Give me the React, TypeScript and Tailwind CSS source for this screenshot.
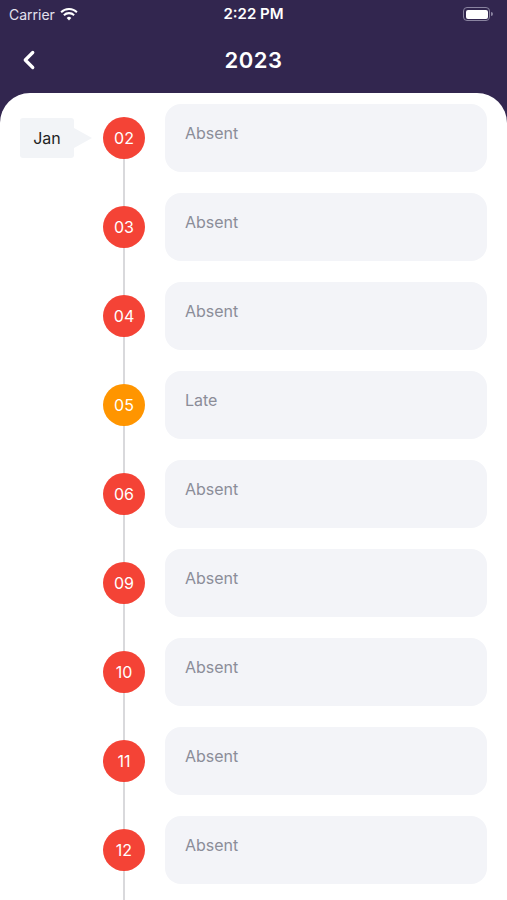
import { ChevronLeft } from 'lucide-react';

type Day = { day: string; status: 'Absent' | 'Late'; month?: string };

const days: Day[] = [
  { day: '02', status: 'Absent', month: 'Jan' },
  { day: '03', status: 'Absent' },
  { day: '04', status: 'Absent' },
  { day: '05', status: 'Late' },
  { day: '06', status: 'Absent' },
  { day: '09', status: 'Absent' },
  { day: '10', status: 'Absent' },
  { day: '11', status: 'Absent' },
  { day: '12', status: 'Absent' },
];

function StatusBar() {
  return (
    <div className="h-[28px] flex items-center justify-between px-[9px] text-white">
      <div className="flex items-center gap-[5px] w-[120px]">
        <span className="text-[14px] text-[#e4e1ee]">Carrier</span>
        <svg width="18" height="13" viewBox="0 0 18 13" fill="#ffffff">
          <path d="M9 12.5 11.3 9.9a3.3 3.3 0 0 0-4.6 0Z" />
          <path d="M9 6.2c1.7 0 3.3.7 4.4 1.8l1.4-1.5A8 8 0 0 0 9 4.1a8 8 0 0 0-5.8 2.4l1.4 1.5A6.2 6.2 0 0 1 9 6.2Z" />
          <path d="M9 2.1c2.8 0 5.3 1.1 7.2 2.9L17.6 3.5A12 12 0 0 0 9 0 12 12 0 0 0 .4 3.5L1.8 5A10.3 10.3 0 0 1 9 2.1Z" />
        </svg>
      </div>
      <span className="text-[15px] font-semibold">2:22 PM</span>
      <div className="w-[120px] flex justify-end pr-[5px]">
        <div className="flex items-center">
          <div className="w-[27px] h-[14px] rounded-[4px] border border-[#8a84a0] p-[1.5px]">
            <div className="w-full h-full rounded-[2px] bg-white" />
          </div>
          <div className="w-[2px] h-[4px] rounded-r-sm bg-[#8a84a0] ml-[1px]" />
        </div>
      </div>
    </div>
  );
}

function Row({ item, first }: { item: Day; first: boolean }) {
  const dot = item.status === 'Late' ? 'bg-[#ff9500]' : 'bg-[#f44336]';
  return (
    <div className="flex pl-5 pr-5">
      <div className="w-[83px] h-[68px] flex items-center">
        {item.month && (
          <div className="flex items-center">
            <div className="w-[54px] h-[40px] bg-[#f2f4f7] rounded-[3px] flex items-center justify-center text-[16px] text-[#1f1f24]">
              {item.month}
            </div>
            <div className="w-0 h-0 border-y-[10px] border-y-transparent border-l-[18px] border-l-[#f2f4f7]" />
          </div>
        )}
      </div>
      <div className="w-[42px] flex flex-col items-center">
        <div className={`w-[2px] h-[13px] ${first ? 'bg-transparent' : 'bg-[#d9d9dc]'}`} />
        <div className={`w-[42px] h-[42px] rounded-full ${dot} flex items-center justify-center text-white text-[16px]`}>
          {item.day}
        </div>
        <div className="w-[2px] h-[40px] bg-[#d9d9dc]" />
      </div>
      <div className="flex-1 ml-5 h-[68px] rounded-[16px] bg-[#f3f4f8] px-5 pt-[18px] text-[16px] text-[#8b8d98] leading-[22px]">
        {item.status}
      </div>
    </div>
  );
}

export default function App() {
  return (
    <div className="w-[507px] h-[900px] overflow-hidden bg-[#32264f] flex flex-col" style={{ fontFamily: 'Inter, "Noto Sans", sans-serif' }}>
      <StatusBar />
      <div className="h-[65px] flex items-center justify-center relative text-white">
        <ChevronLeft className="absolute left-[14px] top-[17px]" size={30} strokeWidth={2.6} />
        <span className="text-[22px] font-semibold tracking-[0.5px]">2023</span>
      </div>
      <div className="flex-1 bg-white rounded-t-[30px] pt-[11px] overflow-hidden">
        {days.map((d, i) => (
          <div key={d.day} className={i === days.length - 1 ? '' : 'h-[89px]'}>
            <Row item={d} first={i === 0} />
          </div>
        ))}
      </div>
    </div>
  );
}
